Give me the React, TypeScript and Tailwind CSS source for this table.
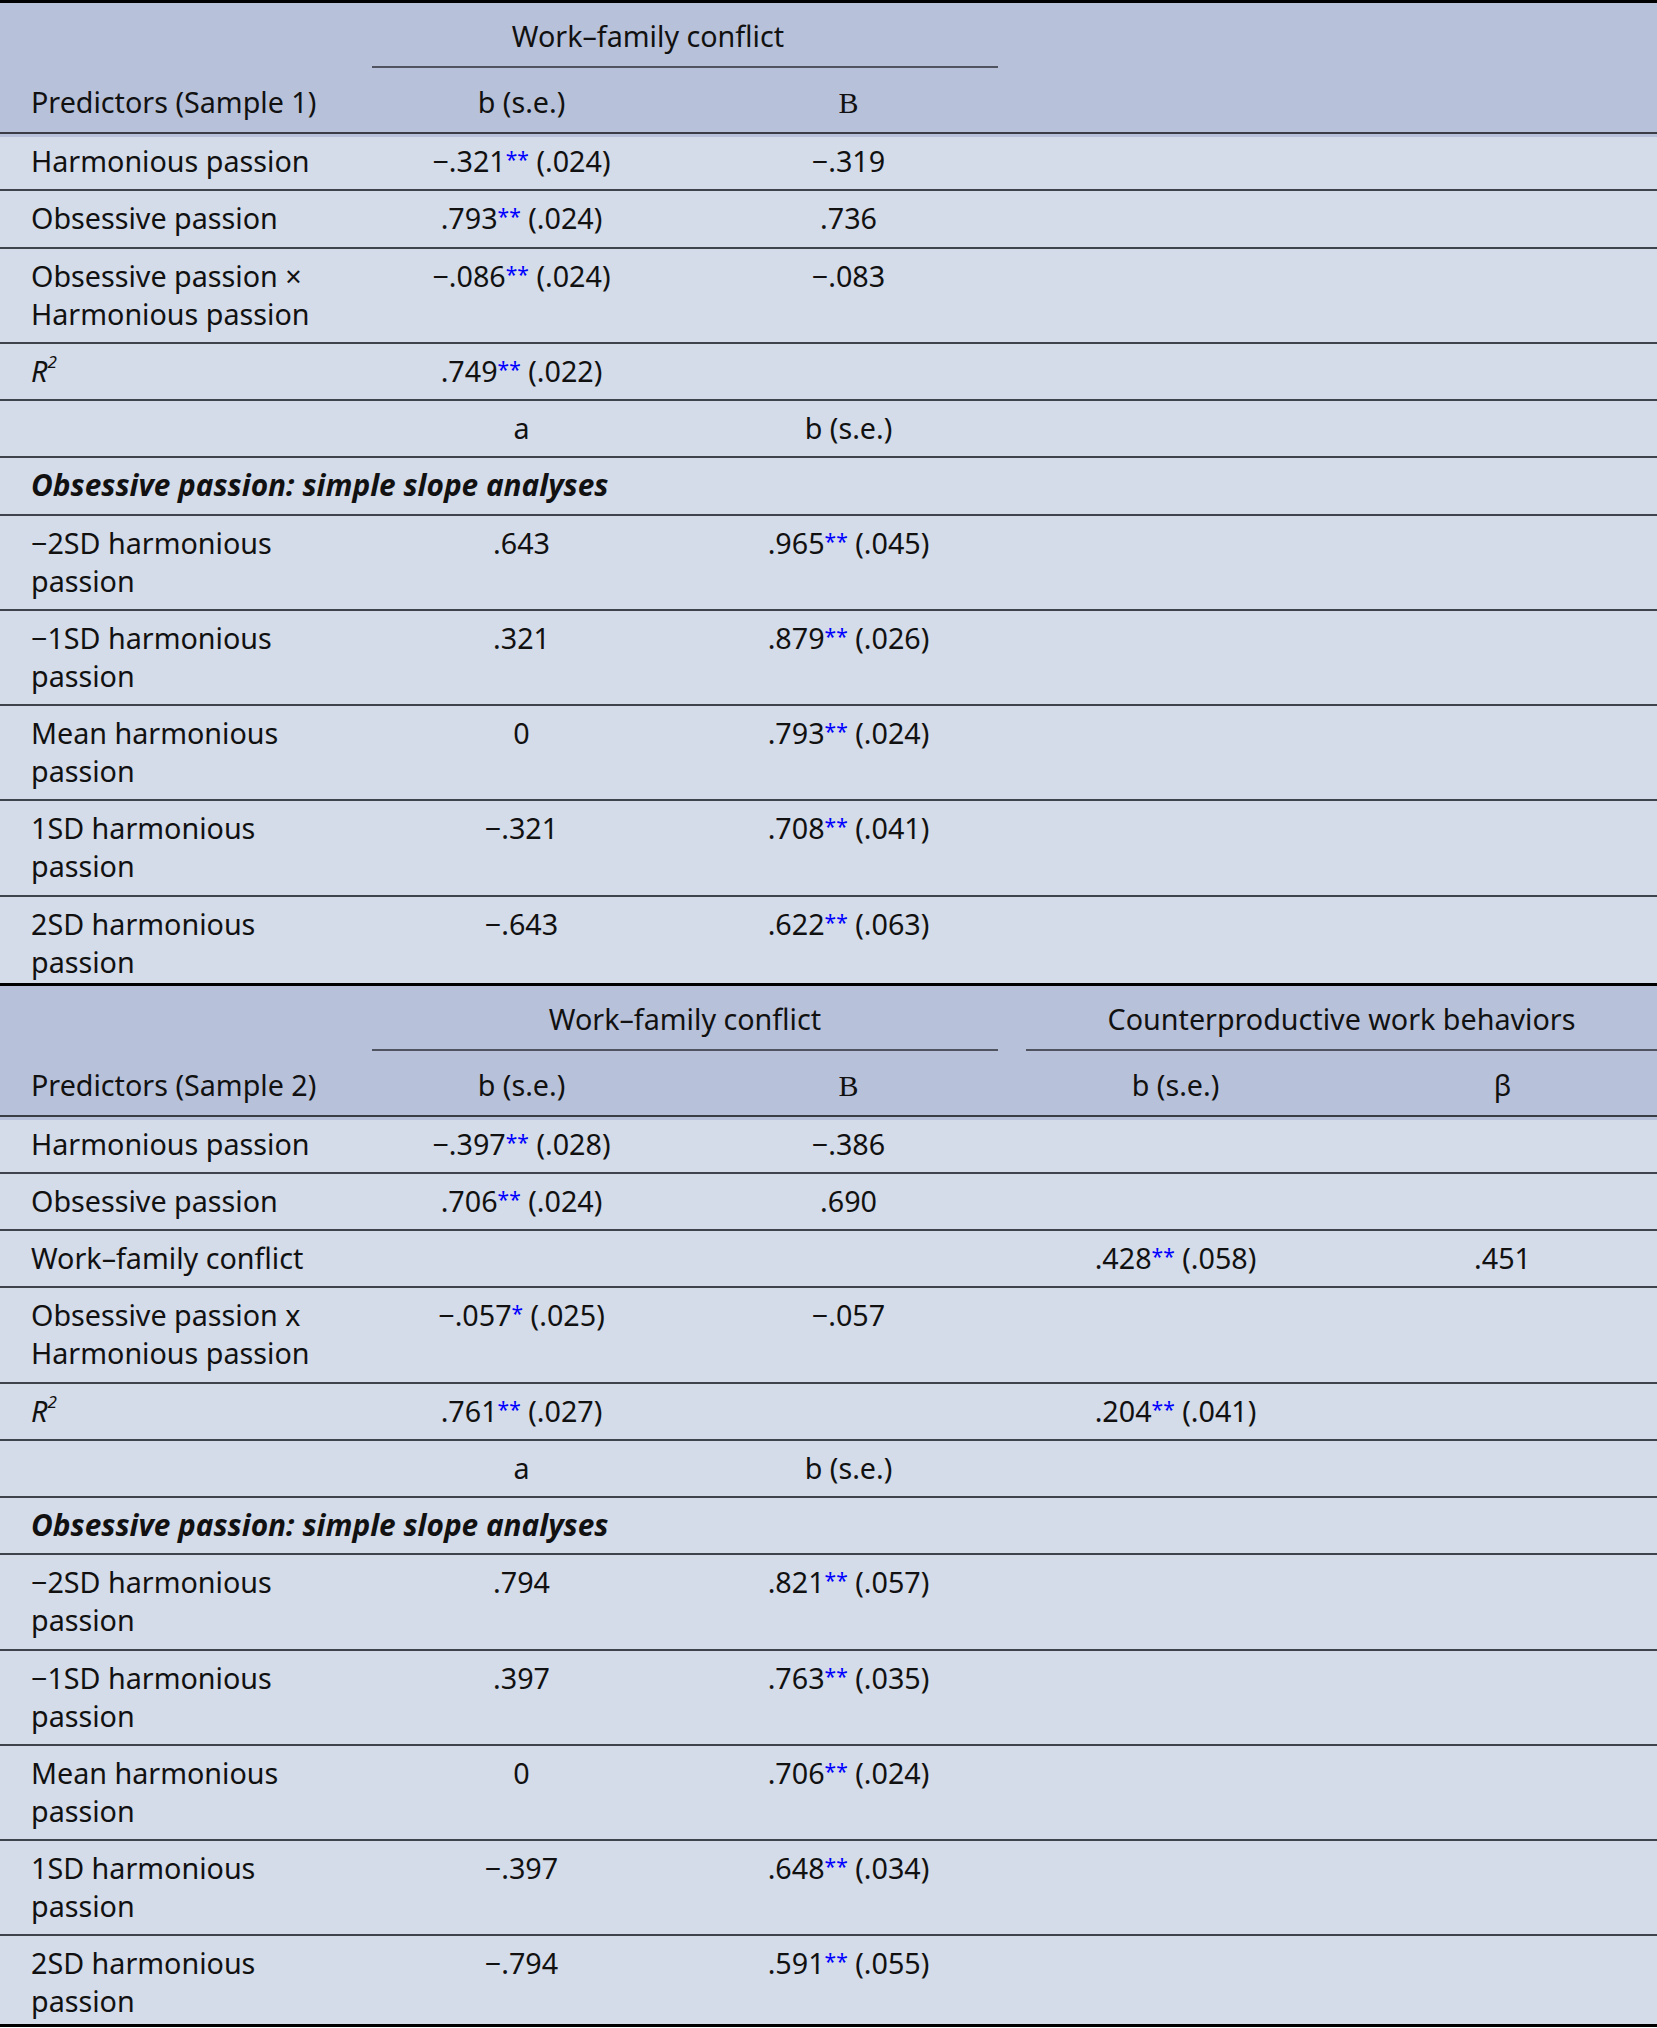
import React from 'react';

type Row = {
  label?: React.ReactNode;
  cells?: string[];
  section?: string;
};

const COLS = 'grid grid-cols-[358px_327px_327px_327px_327px]';

const R2 = (
  <span className="italic">
    R<span className="text-[17px] leading-none align-[14px]">2</span>
  </span>
);

const sample1: Row[] = [
  { label: 'Harmonious passion', cells: ['−.321** (.024)', '−.319'] },
  { label: 'Obsessive passion', cells: ['.793** (.024)', '.736'] },
  { label: <>Obsessive passion ×<br />Harmonious passion</>, cells: ['−.086** (.024)', '−.083'] },
  { label: R2, cells: ['.749** (.022)'] },
  { label: '', cells: ['a', 'b (s.e.)'] },
  { section: 'Obsessive passion: simple slope analyses' },
  { label: <>−2SD harmonious<br />passion</>, cells: ['.643', '.965** (.045)'] },
  { label: <>−1SD harmonious<br />passion</>, cells: ['.321', '.879** (.026)'] },
  { label: <>Mean harmonious<br />passion</>, cells: ['0', '.793** (.024)'] },
  { label: <>1SD harmonious<br />passion</>, cells: ['−.321', '.708** (.041)'] },
  { label: <>2SD harmonious<br />passion</>, cells: ['−.643', '.622** (.063)'] },
];

const sample2: Row[] = [
  { label: 'Harmonious passion', cells: ['−.397** (.028)', '−.386'] },
  { label: 'Obsessive passion', cells: ['.706** (.024)', '.690'] },
  { label: 'Work–family conflict', cells: ['', '', '.428** (.058)', '.451'] },
  { label: <>Obsessive passion x<br />Harmonious passion</>, cells: ['−.057* (.025)', '−.057'] },
  { label: R2, cells: ['.761** (.027)', '', '.204** (.041)'] },
  { label: '', cells: ['a', 'b (s.e.)'] },
  { section: 'Obsessive passion: simple slope analyses' },
  { label: <>−2SD harmonious<br />passion</>, cells: ['.794', '.821** (.057)'] },
  { label: <>−1SD harmonious<br />passion</>, cells: ['.397', '.763** (.035)'] },
  { label: <>Mean harmonious<br />passion</>, cells: ['0', '.706** (.024)'] },
  { label: <>1SD harmonious<br />passion</>, cells: ['−.397', '.648** (.034)'] },
  { label: <>2SD harmonious<br />passion</>, cells: ['−.794', '.591** (.055)'] },
];

// splits "**" out so the stars can be blue and raised
const Val = ({ text }: { text: string }) => (
  <>
    {text.split(/(\*+)/).map((part, i) =>
      part.startsWith('*') ? (
        <span key={i} className="text-[#0000ff] text-[21px] leading-none align-[5px]">
          {part}
        </span>
      ) : (
        <span key={i}>{part}</span>
      )
    )}
  </>
);

const BodyRow = ({ row, first, last, second }: { row: Row; first: boolean; last: boolean; second?: boolean }) => (
  <div
    className={`${COLS} ${first ? 'pt-[5px]' : 'pt-[8px]'} ${
      last ? (second ? 'pb-[4px]' : 'pb-[2px]') : 'pb-[9.25px] border-b-2 border-[#3f434b]'
    }`}
  >
    {row.section ? (
      <div className="col-span-5 pl-[31px] font-bold italic text-[29.8px]">{row.section}</div>
    ) : (
      <>
        <div className="pl-[31px]">{row.label}</div>
        {[0, 1, 2, 3].map((i) => (
          <div key={i} className="text-center">
            <Val text={row.cells?.[i] ?? ''} />
          </div>
        ))}
      </>
    )}
  </div>
);

const Table = ({ sample, rows, second }: { sample: number; rows: Row[]; second?: boolean }) => (
  <div className={`border-t-[3px] border-black ${second ? 'border-b-[3px]' : ''}`}>
    <div className="bg-[#b8c1da]">
      <div className={`${COLS} pt-[14px]`}>
        <div />
        <div className="col-span-2 px-[14px]">
          <div className={`border-b-2 border-[#4f5460] pb-[11px] text-center ${second ? '' : 'pr-[74px]'}`}>
            Work–family conflict
          </div>
        </div>
        {second ? (
          <div className="col-span-2 pl-[14px]">
            <div className="border-b-2 border-[#4f5460] pb-[11px] text-center pr-[9px]">
              Counterproductive work behaviors
            </div>
          </div>
        ) : (
          <div className="col-span-2" />
        )}
      </div>
      <div className={`${COLS} pt-[15px] pb-[10px] border-b-2 border-[#3a3d44]`}>
        <div className="pl-[31px]">Predictors (Sample {sample})</div>
        <div className="text-center">b (s.e.)</div>
        <div className="text-center">
          <span className="font-['Liberation_Serif',serif] text-[30px]">B</span>
        </div>
        <div className="text-center">{second ? 'b (s.e.)' : ''}</div>
        <div className="text-center">{second ? 'β' : ''}</div>
      </div>
      <div className="h-[3px]" />
    </div>
    <div className="bg-[#d4dbe9]">
      {rows.map((row, i) => (
        <BodyRow key={i} row={row} first={i === 0} last={i === rows.length - 1} second={second} />
      ))}
    </div>
  </div>
);

export default function App() {
  return (
    <div className="w-full overflow-hidden bg-[#d4dbe9] font-['Noto_Sans',sans-serif] text-[28.7px] leading-[38px] text-[#111]">
      <div className="w-[1666px]">
        <Table sample={1} rows={sample1} />
        <Table sample={2} rows={sample2} second />
      </div>
    </div>
  );
}
